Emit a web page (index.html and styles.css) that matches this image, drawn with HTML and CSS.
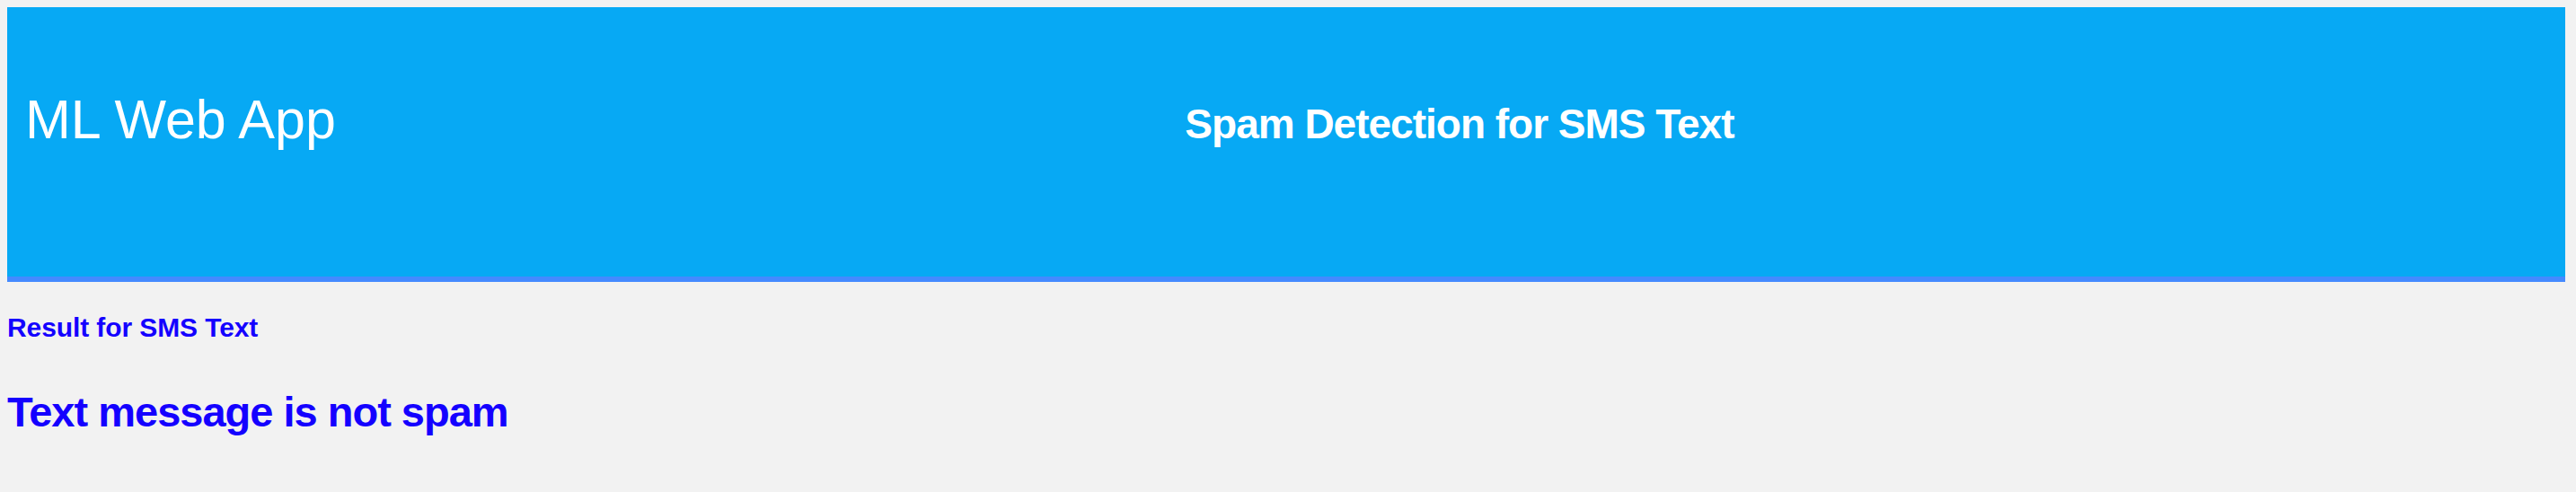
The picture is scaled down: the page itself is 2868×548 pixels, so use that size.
FILE: index.html
```html
<!DOCTYPE html>
<html lang="en">
<head>
<meta charset="utf-8">
<title>ML Web App</title>
<link rel="stylesheet" href="styles.css">
</head>
<body>
<header class="site-header">
  <h1 class="brand">ML Web App</h1>
  <h2 class="page-title">Spam Detection for SMS Text</h2>
</header>
<main class="result">
  <h2 class="result-label">Result for SMS Text</h2>
  <h1 class="result-value">Text message is not spam</h1>
</main>
</body>
</html>
```
FILE: styles.css
```css
html, body {
  background: #f2f2f2;
}
body {
  margin: 8px;
  font-family: "Liberation Sans", Arial, sans-serif;
}
.site-header {
  display: flex;
  align-items: baseline;
  box-sizing: border-box;
  height: 306px;
  margin-right: 4px;
  padding: 90px 0 0 20px;
  background: #07a9f4;
  border-bottom: 6px solid #448aff;
  color: #ffffff;
}
.brand {
  margin: 0;
  font-size: 61px;
  font-weight: 400;
  line-height: normal;
}
.page-title {
  flex: 1;
  margin: 0;
  padding-left: 20px;
  text-align: center;
  font-size: 46px;
  font-weight: 700;
  letter-spacing: -1px;
  line-height: normal;
}
.result {
  color: #1400ff;
}
.result-label {
  margin: 34px 0 0;
  font-size: 30px;
  font-weight: 700;
  letter-spacing: -0.1px;
  line-height: normal;
}
.result-value {
  margin: 49px 0 0;
  font-size: 47px;
  font-weight: 700;
  letter-spacing: -1px;
  line-height: normal;
}
```
